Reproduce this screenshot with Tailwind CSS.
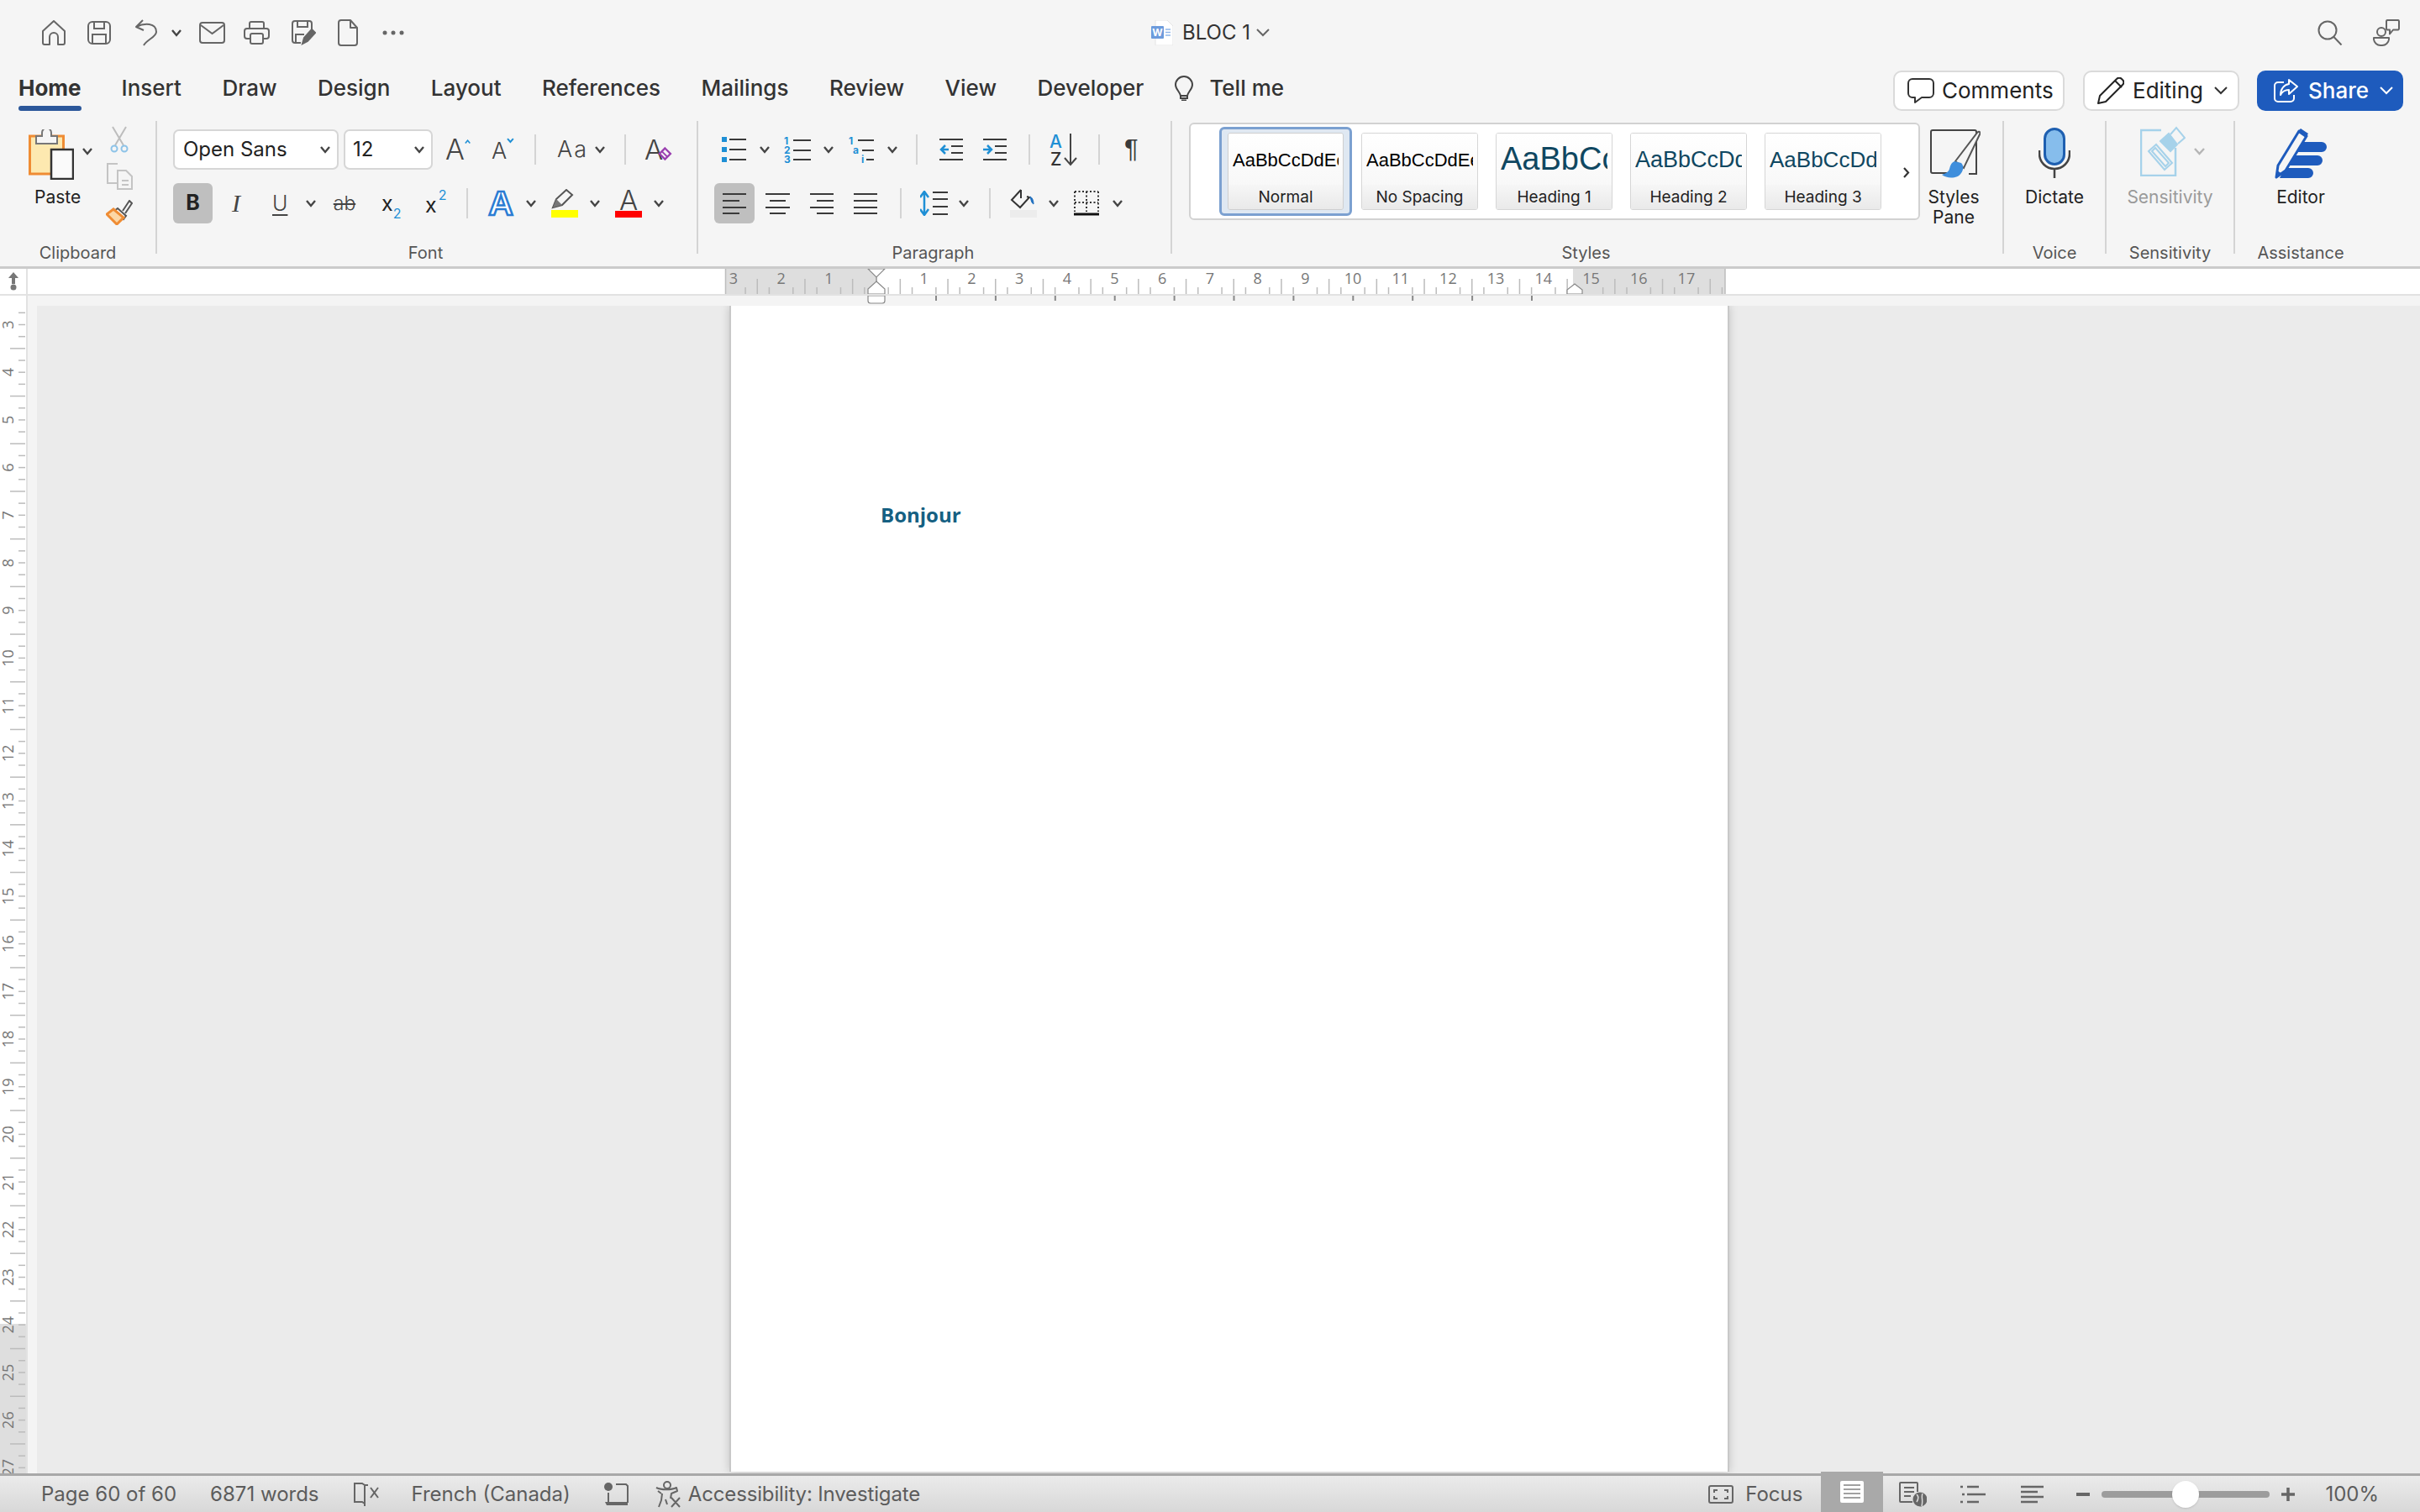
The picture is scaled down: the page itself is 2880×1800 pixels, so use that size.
<!DOCTYPE html>
<html lang="en">
<head>
    <meta charset="UTF-8">
    <script src="https://cdn.jsdelivr.net/npm/@tailwindcss/browser@4"></script>
    <title>BLOC 1</title>
</head>
<body class="bg-[#f5f5f5] font-[family-name:Inter,sans-serif] text-[#333] overflow-hidden">
<div class="w-[2880px] h-[1800px] flex flex-col">

    <!-- title bar -->
    <div class="h-[76px] pt-[2px] flex items-center relative shrink-0">
        <svg class="w-[30px] h-[30px] ml-[49px]" viewBox="0 0 30 30" fill="none" stroke="#666" stroke-width="2" stroke-linejoin="round"><path d="M2 13 15 1l13 12v14a2 2 0 0 1-2 2h-6v-9a5 5 0 0 0-10 0v9H4a2 2 0 0 1-2-2Z"/></svg>
        <svg class="w-[28px] h-[28px] ml-[25px]" viewBox="0 0 28 28" fill="none" stroke="#666" stroke-width="2"><rect x="1" y="1" width="26" height="26" rx="5"/><path d="M8 1v8h12V1M6 27V16h16v11"/></svg>
        <svg class="w-[28px] h-[32px] ml-[28px]" viewBox="0 0 28 32" fill="none" stroke="#666" stroke-width="2" stroke-linejoin="round"><path d="M10 1 2 9l9 4M2 9c10-5 24-5 24 6 0 6-11 9-15 16"/></svg>
        <svg class="w-[12px] h-[9px] ml-[16px]" viewBox="0 0 12 9" fill="none" stroke="#444" stroke-width="2.400"><path d="m1 1 5 6 5-6"/></svg>
        <svg class="w-[31px] h-[26px] ml-[21px]" viewBox="0 0 31 26" fill="none" stroke="#666" stroke-width="2"><rect x="1" y="1" width="29" height="24" rx="3"/><path d="m2 4 13.500 10L29 4"/></svg>
        <svg class="w-[31px] h-[28px] ml-[22px]" viewBox="0 0 31 28" fill="none" stroke="#666" stroke-width="2"><path d="M7 9V3a2 2 0 0 1 2-2h13a2 2 0 0 1 2 2v6M7 21H4a3 3 0 0 1-3-3v-6a3 3 0 0 1 3-3h23a3 3 0 0 1 3 3v6a3 3 0 0 1-3 3h-3"/><rect x="8" y="15" width="15" height="12" rx="2"/></svg>
        <svg class="w-[30px] h-[30px] ml-[25px]" viewBox="0 0 30 30" fill="none" stroke="#666" stroke-width="2"><path d="M12 27H5a3 3 0 0 1-3-3V4a3 3 0 0 1 3-3h17a3 3 0 0 1 3 3v7M8 1v7h12V1M6 26v-9h10"/><path d="m14 28 2-7 9-10 4 4-9 10Z" fill="#666" stroke="#666"/></svg>
        <svg class="w-[24px] h-[32px] ml-[26px]" viewBox="0 0 24 32" fill="none" stroke="#666" stroke-width="2" stroke-linejoin="round"><path d="M4 1h11l8 9v18a3 3 0 0 1-3 3H4a3 3 0 0 1-3-3V4a3 3 0 0 1 3-3ZM15 1v9h8"/></svg>
        <svg class="w-[26px] h-[6px] ml-[29px]" viewBox="0 0 26 6" fill="#666"><circle cx="3" cy="3" r="2.500"/><circle cx="13" cy="3" r="2.500"/><circle cx="23" cy="3" r="2.500"/></svg>

        <div class="flex items-center ml-[889px]">
            <svg class="w-[26px] h-[30px]" viewBox="0 0 26 30"><path d="M5 0h14l7 7v23H5Z" fill="#fff" stroke="#e4e4e4"/><rect x="0" y="7" width="15" height="15" rx="1" fill="#6c9bdc"/><text x="7.500" y="19" font-size="12" font-family="Inter" font-weight="700" text-anchor="middle" fill="#fff">W</text><path d="M17 11h6M17 14.500h6M17 18h6" stroke="#8fb6ea" stroke-width="1.500"/></svg>
            <span class="ml-[11px] text-[24px] leading-[30px] text-[#333]">BLOC 1</span>
            <svg class="w-[16px] h-[10px] ml-[7px]" viewBox="0 0 16 10" fill="none" stroke="#666" stroke-width="2"><path d="m1 1 7 7 7-7"/></svg>
        </div>

        <svg class="w-[30px] h-[30px] ml-auto" viewBox="0 0 30 30" fill="none" stroke="#666" stroke-width="2"><circle cx="12" cy="12" r="10.500"/><path d="m19.500 20 9 9.500"/></svg>
        <svg class="w-[32px] h-[32px] ml-[36px] mr-[24px]" viewBox="0 0 32 32" fill="none" stroke="#666" stroke-width="2" stroke-linejoin="round"><circle cx="10" cy="15" r="5"/><path d="M1 22h18v2a8 8 0 0 1-8 7H9a8 8 0 0 1-8-7Z"/><path d="M17 1h13a1.500 1.500 0 0 1 1 1.500V11a1.500 1.500 0 0 1-1 1.500h-6l-4 5v-5h-3a1.500 1.500 0 0 1-1-1.500V2.500A1.500 1.500 0 0 1 17 1Z" fill="#f5f5f5"/></svg>
    </div>

    <!-- tabs -->
    <div class="h-[68px] flex items-start shrink-0 text-[26px] leading-[28px] font-medium pl-[22px]">
        <div class="flex flex-col pt-[15px]">
            <span class="font-bold">Home</span>
            <div class="h-[6px] rounded-full bg-[#2b579a] mt-[7px]"></div>
        </div>
        <div class="flex gap-x-[48.500px] pt-[15px] ml-[48px]">
            <span>Insert</span><span>Draw</span><span>Design</span><span>Layout</span><span>References</span><span>Mailings</span><span>Review</span><span>View</span><span>Developer</span>
        </div>
        <div class="flex items-center pt-[14px] ml-[37px]">
            <svg class="w-[22px] h-[30px]" viewBox="0 0 22 30" fill="none" stroke="#444" stroke-width="2"><path d="M11 1a10 10 0 0 0-10 10c0 5 5 8 6 13h8c1-5 6-8 6-13A10 10 0 0 0 11 1Z"/><path d="M7 24h8v3H7ZM8 29.500h6"/></svg>
            <span class="ml-[19px]">Tell me</span>
        </div>
        <div class="flex items-start ml-auto mt-[8px] mr-[20px] font-normal text-[26px] text-[#222]">
            <div class="w-[204px] h-[48px] rounded-[10px] bg-white border-2 border-[#dadada] flex items-center pl-[15px]">
                <svg class="w-[32px] h-[30px]" viewBox="0 0 32 30" fill="none" stroke="#333" stroke-width="2" stroke-linejoin="round"><path d="M6 1h20a5 5 0 0 1 5 5v12a5 5 0 0 1-5 5H17l-8 6v-6H6a5 5 0 0 1-5-5V6a5 5 0 0 1 5-5Z"/></svg>
                <span class="ml-[9px]">Comments</span>
            </div>
            <div class="w-[186px] h-[48px] rounded-[10px] bg-white border-2 border-[#dadada] flex items-center pl-[15px] ml-[22px]">
                <svg class="w-[32px] h-[32px]" viewBox="0 0 32 32" fill="none" stroke="#222" stroke-width="2" stroke-linejoin="round"><path d="M1 31 3 22 23 2a4 4 0 0 1 6 0l1 1a4 4 0 0 1 0 6L10 29Z"/><path d="m21 4 8 8"/></svg>
                <span class="ml-[10px]">Editing</span>
                <svg class="w-[16px] h-[10px] ml-[13px]" viewBox="0 0 16 10" fill="none" stroke="#333" stroke-width="2"><path d="m1 1 7 7 7-7"/></svg>
            </div>
            <div class="w-[174px] h-[48px] rounded-[10px] bg-[#1e5bbd] flex items-center pl-[20px] ml-[21px] text-white font-medium">
                <svg class="w-[29px] h-[28px]" viewBox="0 0 29 28" fill="none" stroke="#fff" stroke-width="2" stroke-linejoin="round"><path d="M12 4H5a4 4 0 0 0-4 4v15a4 4 0 0 0 4 4h15a4 4 0 0 0 4-4v-4"/><path d="M18 1l10 8-10 9v-5c-5 0-8 2-10 6 0-7 4-12 10-13Z"/></svg>
                <span class="ml-[12px]">Share</span>
                <svg class="w-[16px] h-[10px] ml-[13px]" viewBox="0 0 16 10" fill="none" stroke="#fff" stroke-width="2"><path d="m1 1 7 7 7-7"/></svg>
            </div>
        </div>
    </div>

    <!-- ribbon -->
    <div class="h-[176px] flex items-start border-b-[3px] border-[#cbcbcb] shrink-0 text-[#222]">

        <!-- clipboard -->
        <div class="w-[185px] h-[173px] flex flex-col shrink-0">
            <div class="flex pt-[6px] h-[144px]">
                <div class="w-[64px] ml-[34px] flex flex-col items-start">
                    <svg class="w-[54px] h-[60px] mt-[4px]" viewBox="0 0 54 60"><rect x="1.500" y="8" width="40" height="45" fill="#fde9b0" stroke="#ef8c34" stroke-width="3"/><path d="M9 17V8h7V4a5 5 0 0 1 11 0v4h7v9Z" fill="#f5f5f5" stroke="#777" stroke-width="2"/><rect x="27" y="24" width="26" height="35" fill="#fafafa" stroke="#333" stroke-width="2.500"/></svg>
                    <span class="text-[21px] leading-[26px] mt-[8px] ml-[7px]">Paste</span>
                </div>
                <svg class="w-[12px] h-[9px] mt-[26px]" viewBox="0 0 12 9" fill="none" stroke="#444" stroke-width="2.400"><path d="m1 1 5 6 5-6"/></svg>
                <div class="flex flex-col ml-[16px] w-[32px]">
                    <svg class="w-[22px] h-[32px] ml-[5px]" viewBox="0 0 22 32" fill="none" stroke="#bdbdbd" stroke-width="2"><path d="M3 1 16 23M19 1 6 23"/><circle cx="5" cy="27" r="3.500" stroke="#8dc3e8"/><circle cx="17" cy="27" r="3.500" stroke="#8dc3e8"/></svg>
                    <svg class="w-[32px] h-[32px] mt-[12px]" viewBox="0 0 32 32" fill="none" stroke="#c4c4c4" stroke-width="2"><path d="M14 1H2v23h12"/><path d="M14 9h10l7 7v15H14Z" fill="#f5f5f5"/><path d="M19 21h8M19 26h8"/></svg>
                    <svg class="w-[32px] h-[30px] mt-[12px]" viewBox="0 0 32 30" fill="none"><path d="M20 13 28 1l3 3-8 12" stroke="#555" stroke-width="2"/><path d="m14 10 10 9-3 4-11-10Z" fill="#fff" stroke="#555" stroke-width="2"/><path d="M9 11 1 17l12 12 8-8Z" fill="#fcd7a6" stroke="#ef8c34" stroke-width="3"/></svg>
                </div>
            </div>
            <span class="text-[20px] leading-[24px] text-[#555] text-center mt-[1px]">Clipboard</span>
        </div>
        <div class="w-[2px] h-[158px] bg-[#d4d4d4] shrink-0"></div>

        <!-- font -->
        <div class="w-[642px] h-[173px] flex flex-col shrink-0">
            <div class="flex items-center h-[48px] mt-[10px]">
                <div class="w-[197px] h-[48px] ml-[19px] rounded-[7px] bg-white border-2 border-[#d6d6d6] flex items-center pl-[10px] text-[24px]">
                    <span>Open Sans</span>
                    <svg class="w-[12px] h-[9px] ml-auto mr-[8px]" viewBox="0 0 12 9" fill="none" stroke="#444" stroke-width="2.400"><path d="m1 1 5 6 5-6"/></svg>
                </div>
                <div class="w-[106px] h-[48px] ml-[6px] rounded-[7px] bg-white border-2 border-[#d6d6d6] flex items-center pl-[9px] text-[24px]">
                    <span>12</span>
                    <svg class="w-[12px] h-[9px] ml-auto mr-[8px]" viewBox="0 0 12 9" fill="none" stroke="#444" stroke-width="2.400"><path d="m1 1 5 6 5-6"/></svg>
                </div>
                <div class="w-[30px] ml-[15px] flex items-start">
                    <span class="text-[34px] leading-[36px] font-light text-[#444]">A</span>
                    <svg class="w-[9px] h-[7px] mt-[5px]" viewBox="0 0 9 7" fill="none" stroke="#1e8fd5" stroke-width="2"><path d="m1 6 3.500-4L8 6"/></svg>
                </div>
                <div class="w-[27px] ml-[25px] flex items-start pt-[4px]">
                    <span class="text-[27px] leading-[32px] font-light text-[#444]">A</span>
                    <svg class="w-[9px] h-[7px]" viewBox="0 0 9 7" fill="none" stroke="#1e8fd5" stroke-width="2"><path d="m1 1 3.500 4L8 1"/></svg>
                </div>
                <div class="w-[2px] h-[36px] ml-[24px] bg-[#d4d4d4]"></div>
                <span class="w-[34px] ml-[25px] text-[27px] leading-[32px] font-light tracking-[2px] text-[#444]">Aa</span>
                <svg class="w-[12px] h-[9px] ml-[11px]" viewBox="0 0 12 9" fill="none" stroke="#444" stroke-width="2.400"><path d="m1 1 5 6 5-6"/></svg>
                <div class="w-[2px] h-[36px] ml-[23px] bg-[#d4d4d4]"></div>
                <div class="w-[33px] ml-[22px] flex items-start">
                    <span class="text-[33px] leading-[36px] font-light text-[#444]">A</span>
                    <svg class="w-[18px] h-[18px] mt-[14px] ml-[-6px]" viewBox="0 0 18 18" fill="#f5f5f5" stroke="#9a3fb0" stroke-width="2.500"><path d="M9 2 16 9 9 16 2 9Z"/><path d="m5 6 7 7" stroke-width="2"/></svg>
                </div>
            </div>
            <div class="flex items-center h-[48px] mt-[16px]">
                <div class="w-[47px] h-[48px] ml-[19px] rounded-[6px] bg-[#bfbfbf] flex items-center justify-center text-[25px] font-bold">B</div>
                <span class="w-[12px] ml-[23px] text-[30px] leading-[32px] italic font-[family-name:'Liberation_Serif',serif] text-[#444]">I</span>
                <span class="w-[18px] ml-[36px] text-[25px] leading-[30px] font-light underline underline-offset-[4px] text-[#444]">U</span>
                <svg class="w-[12px] h-[9px] ml-[22px]" viewBox="0 0 12 9" fill="none" stroke="#444" stroke-width="2.400"><path d="m1 1 5 6 5-6"/></svg>
                <span class="w-[32px] ml-[18px] text-center text-[23px] leading-[30px] font-light line-through text-[#444]">ab</span>
                <div class="w-[24px] ml-[28px] flex items-end text-[25px] leading-[28px]">x<span class="text-[16px] leading-[16px] text-[#1e8fd5] mb-[-6px]">2</span></div>
                <div class="w-[30px] ml-[28px] flex items-start text-[25px] leading-[28px] pt-[4px]">x<span class="text-[16px] leading-[16px] text-[#1e8fd5] mt-[-6px] ml-[2px]">2</span></div>
                <div class="w-[2px] h-[36px] ml-[19px] bg-[#d4d4d4]"></div>
                <span class="w-[32px] ml-[23px] text-center text-[41px] leading-[44px] font-bold font-[family-name:'Liberation_Sans',sans-serif] text-white [-webkit-text-stroke:2.500px_#2b7cd3]">A</span>
                <svg class="w-[12px] h-[9px] ml-[14px]" viewBox="0 0 12 9" fill="none" stroke="#444" stroke-width="2.400"><path d="m1 1 5 6 5-6"/></svg>
                <svg class="w-[32px] h-[34px] ml-[18px]" viewBox="0 0 32 34"><rect y="25" width="32" height="9" fill="#ffff00"/><path d="m2 22 4-10L18 1l7 6-12 12Z" fill="#f5f5f5" stroke="#555" stroke-width="2"/><path d="m2 22 4-10 7 7Z" fill="#777"/></svg>
                <svg class="w-[12px] h-[9px] ml-[14px]" viewBox="0 0 12 9" fill="none" stroke="#444" stroke-width="2.400"><path d="m1 1 5 6 5-6"/></svg>
                <div class="w-[32px] ml-[18px] flex flex-col items-center">
                    <span class="text-[33px] leading-[26px] font-light text-[#444]">A</span>
                    <div class="w-[32px] h-[8px] bg-[#ff0000]"></div>
                </div>
                <svg class="w-[12px] h-[9px] ml-[14px]" viewBox="0 0 12 9" fill="none" stroke="#444" stroke-width="2.400"><path d="m1 1 5 6 5-6"/></svg>
            </div>
            <span class="text-[20px] leading-[24px] text-[#555] text-center mt-[23px] pr-[3px]">Font</span>
        </div>
        <div class="w-[2px] h-[158px] bg-[#d4d4d4] shrink-0"></div>

        <!-- paragraph -->
        <div class="w-[562px] h-[173px] flex flex-col shrink-0">
            <div class="flex items-center h-[48px] mt-[10px]">
                <svg class="w-[30px] h-[30px] ml-[27px]" viewBox="0 0 30 30"><path d="M1 0h6v6H1ZM1 12h6v6H1ZM1 24h6v6H1Z" fill="#1e8fd5"/><path d="M10 3h20M10 15h20M10 27h20" stroke="#3a3a3a" stroke-width="2"/></svg>
                <svg class="w-[12px] h-[9px] ml-[16px]" viewBox="0 0 12 9" fill="none" stroke="#444" stroke-width="2.400"><path d="m1 1 5 6 5-6"/></svg>
                <svg class="w-[32px] h-[32px] ml-[17px]" viewBox="0 0 32 32" font-family="Inter" font-size="12" font-weight="700" fill="#1e8fd5"><text x="0" y="10">1</text><text x="0" y="21">2</text><text x="0" y="32">3</text><path d="M11 5h21M11 17h21M11 28h21" stroke="#3a3a3a" stroke-width="2"/></svg>
                <svg class="w-[12px] h-[9px] ml-[15px]" viewBox="0 0 12 9" fill="none" stroke="#444" stroke-width="2.400"><path d="m1 1 5 6 5-6"/></svg>
                <svg class="w-[30px] h-[32px] ml-[18px]" viewBox="0 0 30 32" font-family="Inter" font-size="12" font-weight="700" fill="#1e8fd5"><text x="0" y="10">1</text><text x="5" y="21">a</text><text x="15" y="32">i</text><path d="M11 5h19M16 17h14M21 28h9" stroke="#3a3a3a" stroke-width="2"/></svg>
                <svg class="w-[12px] h-[9px] ml-[16px]" viewBox="0 0 12 9" fill="none" stroke="#444" stroke-width="2.400"><path d="m1 1 5 6 5-6"/></svg>
                <div class="w-[2px] h-[36px] ml-[22px] bg-[#d4d4d4]"></div>
                <svg class="w-[28px] h-[32px] ml-[26px]" viewBox="0 0 28 32"><path d="M0 4h28M14 12h14M14 20h14M0 28h28" stroke="#3a3a3a" stroke-width="2"/><path d="M11 16H2m5-5-5 5 5 5" fill="none" stroke="#1e8fd5" stroke-width="2.500"/></svg>
                <svg class="w-[28px] h-[32px] ml-[24px]" viewBox="0 0 28 32"><path d="M0 4h28M14 12h14M14 20h14M0 28h28" stroke="#3a3a3a" stroke-width="2"/><path d="M0 16h9M5 11l5 5-5 5" fill="none" stroke="#1e8fd5" stroke-width="2.500"/></svg>
                <div class="w-[2px] h-[36px] ml-[26px] bg-[#d4d4d4]"></div>
                <svg class="w-[33px] h-[40px] ml-[23px]" viewBox="0 0 33 40" font-family="Inter" font-size="21" font-weight="500"><text x="0" y="18" fill="#1e8fd5">A</text><text x="1" y="39" fill="#333">Z</text><path d="M25 1v36M18 30l7 8 7-8" fill="none" stroke="#444" stroke-width="2"/></svg>
                <div class="w-[2px] h-[36px] ml-[25px] bg-[#d4d4d4]"></div>
                <span class="w-[20px] ml-[29px] text-[31px] leading-[36px] text-[#3a3a3a] font-[family-name:'Liberation_Sans',sans-serif]">¶</span>
            </div>
            <div class="flex items-center h-[48px] mt-[16px]">
                <div class="w-[48px] h-[48px] ml-[19px] rounded-[6px] bg-[#bfbfbf] flex items-center justify-center">
                    <svg class="w-[28px] h-[26px]" viewBox="0 0 28 26"><path d="M0 2h28M0 10h20M0 18h28M0 25h20" stroke="#3a3a3a" stroke-width="2"/></svg>
                </div>
                <svg class="w-[29px] h-[26px] ml-[13px]" viewBox="0 0 29 26"><path d="M0 2h29M5 10h19M0 18h29M5 25h19" stroke="#3a3a3a" stroke-width="2"/></svg>
                <svg class="w-[28px] h-[26px] ml-[24px]" viewBox="0 0 28 26"><path d="M0 2h28M8 10h20M0 18h28M8 25h20" stroke="#3a3a3a" stroke-width="2"/></svg>
                <svg class="w-[28px] h-[26px] ml-[24px]" viewBox="0 0 28 26"><path d="M0 2h28M0 10h28M0 18h28M0 25h28" stroke="#3a3a3a" stroke-width="2"/></svg>
                <div class="w-[2px] h-[36px] ml-[27px] bg-[#d4d4d4]"></div>
                <svg class="w-[33px] h-[30px] ml-[22px]" viewBox="0 0 33 30"><path d="M15 2h18M15 10h18M15 19h18M15 28h18" stroke="#3a3a3a" stroke-width="2"/><path d="M5 2v26M0 8l5-7 5 7M0 22l5 7 5-7" fill="none" stroke="#1e8fd5" stroke-width="2.500"/></svg>
                <svg class="w-[12px] h-[9px] ml-[13px]" viewBox="0 0 12 9" fill="none" stroke="#444" stroke-width="2.400"><path d="m1 1 5 6 5-6"/></svg>
                <div class="w-[2px] h-[36px] ml-[24px] bg-[#d4d4d4]"></div>
                <svg class="w-[32px] h-[34px] ml-[23px]" viewBox="0 0 32 34"><rect y="25" width="32" height="9" fill="#ececec"/><path d="M13 1 2 13l10 9 11-12-3-1" fill="#f5f5f5" stroke="#333" stroke-width="2"/><path d="M13 1v10" stroke="#333" stroke-width="2"/><path d="M24 9c2 1 4 4 4 9-2-1-3-4-4-9Z" fill="#1e6fc0" stroke="#1e6fc0"/></svg>
                <svg class="w-[12px] h-[9px] ml-[14px]" viewBox="0 0 12 9" fill="none" stroke="#444" stroke-width="2.400"><path d="m1 1 5 6 5-6"/></svg>
                <svg class="w-[30px] h-[30px] ml-[18px]" viewBox="0 0 30 30" fill="none"><path d="M1 1v24M29 1v24M1 1h28M1 14h28M15 1v24" stroke="#333" stroke-width="2" stroke-dasharray="2 2.500"/><path d="M0 28h30" stroke="#111" stroke-width="3"/></svg>
                <svg class="w-[12px] h-[9px] ml-[16px]" viewBox="0 0 12 9" fill="none" stroke="#444" stroke-width="2.400"><path d="m1 1 5 6 5-6"/></svg>
            </div>
            <span class="text-[20px] leading-[24px] text-[#555] text-center mt-[23px] pr-[3px]">Paragraph</span>
        </div>
        <div class="w-[2px] h-[158px] bg-[#d4d4d4] shrink-0"></div>

        <!-- styles -->
        <div class="w-[988px] h-[173px] flex flex-col shrink-0">
            <div class="flex items-start h-[144px]">
                <div class="w-[870px] h-[116px] ml-[20px] mt-[2px] bg-white border-2 border-[#d2d2d2] rounded-[6px] flex items-start pl-[34px] pt-[3px] shrink-0">
                    <div class="w-[158px] h-[106px] rounded-[6px] border-[3px] border-[#7ba0d0] bg-[#dfe8f2] pl-[7px] pt-[4px] shrink-0">
                        <div class="w-[138px] h-[92px] rounded-[3px] border border-[#cfcfcf] flex flex-col overflow-hidden">
                            <div class="h-[61px] bg-linear-to-b from-white to-[#f8f8f8] px-[5px]"><div class="overflow-hidden whitespace-nowrap leading-[63px] text-[22px] text-black font-[family-name:'Liberation_Sans',sans-serif]">AaBbCcDdEe</div></div>
                            <div class="flex-1 bg-linear-to-b from-[#f6f6f6] to-[#e9e9e9] text-center text-[19px] leading-[30px] text-[#222]">Normal</div>
                        </div>
                    </div>
                    <div class="w-[139px] h-[92px] ml-[11px] mt-[7px] rounded-[3px] border border-[#d6d6d6] flex flex-col overflow-hidden shrink-0">
                        <div class="h-[61px] bg-linear-to-b from-white to-[#f8f8f8] px-[5px]"><div class="overflow-hidden whitespace-nowrap leading-[63px] text-[22px] text-black font-[family-name:'Liberation_Sans',sans-serif]">AaBbCcDdEe</div></div>
                        <div class="flex-1 bg-linear-to-b from-[#f6f6f6] to-[#e9e9e9] text-center text-[19px] leading-[30px] text-[#222]">No Spacing</div>
                    </div>
                    <div class="w-[139px] h-[92px] ml-[21px] mt-[7px] rounded-[3px] border border-[#d6d6d6] flex flex-col overflow-hidden shrink-0">
                        <div class="h-[61px] bg-linear-to-b from-white to-[#f8f8f8] px-[5px]"><div class="overflow-hidden whitespace-nowrap leading-[61px] text-[38px] text-[#0f4761] font-[family-name:'Liberation_Sans',sans-serif]">AaBbCcDd</div></div>
                        <div class="flex-1 bg-linear-to-b from-[#f6f6f6] to-[#e9e9e9] text-center text-[19px] leading-[30px] text-[#222]">Heading 1</div>
                    </div>
                    <div class="w-[139px] h-[92px] ml-[21px] mt-[7px] rounded-[3px] border border-[#d6d6d6] flex flex-col overflow-hidden shrink-0">
                        <div class="h-[61px] bg-linear-to-b from-white to-[#f8f8f8] px-[5px]"><div class="overflow-hidden whitespace-nowrap leading-[62px] text-[27px] text-[#0f4761] font-[family-name:'Liberation_Sans',sans-serif]">AaBbCcDdEe</div></div>
                        <div class="flex-1 bg-linear-to-b from-[#f6f6f6] to-[#e9e9e9] text-center text-[19px] leading-[30px] text-[#222]">Heading 2</div>
                    </div>
                    <div class="w-[139px] h-[92px] ml-[21px] mt-[7px] rounded-[3px] border border-[#d6d6d6] flex flex-col overflow-hidden shrink-0">
                        <div class="h-[61px] bg-linear-to-b from-white to-[#f8f8f8] px-[5px]"><div class="overflow-hidden whitespace-nowrap leading-[62px] text-[26px] text-[#0f4761] font-[family-name:'Liberation_Sans',sans-serif]">AaBbCcDdEe</div></div>
                        <div class="flex-1 bg-linear-to-b from-[#f6f6f6] to-[#e9e9e9] text-center text-[19px] leading-[30px] text-[#222]">Heading 3</div>
                    </div>
                    <svg class="w-[8px] h-[13px] ml-[26px] self-center" viewBox="0 0 8 13" fill="none" stroke="#333" stroke-width="2.200"><path d="m1 1 5 5.500L1 12"/></svg>
                </div>
                <div class="w-[70px] ml-[5px] mt-[10px] flex flex-col items-center shrink-0 text-[21px] leading-[24px]">
                    <svg class="w-[60px] h-[60px] ml-[4px]" viewBox="0 0 60 60" fill="none"><path d="M22 52H3a2 2 0 0 1-2-2V3a2 2 0 0 1 2-2h50a2 2 0 0 1 2 2v50h-9" stroke="#444" stroke-width="2"/><path d="M30 38 56 4c3-3 4 0 3 2L40 46Z" fill="#f5f5f5" stroke="#555" stroke-width="2"/><path d="M29 38c-3 1-5 4-6 9-1 4-6 6-9 7 6 5 19 5 23-2 3-4 3-9 0-12Z" fill="#3f8edc"/></svg>
                    <span class="mt-[9px]">Styles</span>
                    <span>Pane</span>
                </div>
            </div>
            <span class="text-[20px] leading-[24px] text-[#555] text-center mt-[1px] pr-[3px]">Styles</span>
        </div>
        <div class="w-[2px] h-[158px] bg-[#d4d4d4] shrink-0"></div>

        <!-- voice -->
        <div class="w-[120px] h-[173px] flex flex-col items-center shrink-0">
            <div class="h-[144px] flex flex-col items-center pt-[8px] text-[21px] leading-[24px]">
                <svg class="w-[38px] h-[60px]" viewBox="0 0 38 60" fill="none"><rect x="7.500" y="1.500" width="23" height="42" rx="11.500" fill="#86bdec" stroke="#1e5fb0" stroke-width="3"/><path d="M1 27v4c0 10 8 18 18 18s18-8 18-18v-4M19 49v11" stroke="#444" stroke-width="2.500"/></svg>
                <span class="mt-[11px]">Dictate</span>
            </div>
            <span class="text-[20px] leading-[24px] text-[#555] mt-[1px]">Voice</span>
        </div>
        <div class="w-[2px] h-[158px] bg-[#d4d4d4] shrink-0"></div>

        <!-- sensitivity -->
        <div class="w-[151px] h-[173px] flex flex-col items-center shrink-0">
            <div class="h-[144px] flex flex-col items-center pt-[6px] text-[21px] leading-[24px]">
                <div class="flex items-center ml-[6px]">
                    <svg class="w-[54px] h-[60px]" viewBox="0 0 54 60" fill="none" stroke="#a6d2ea" stroke-width="2"><path d="M25 5H1v54h41V26" stroke-width="2.500"/><path d="m10 30 9-8 19 22-9 8Z"/><path d="m14 30 4-4 16 18-4 4Z"/><path d="m24 18 10-9 10 13-8 8Z" fill="#a6d2ea"/><path d="m36 10 7-8 10 12-8 7"/></svg>
                    <svg class="w-[13px] h-[9px] ml-[10px]" viewBox="0 0 13 9" fill="none" stroke="#b5b5b5" stroke-width="2.400"><path d="m1 1 5.500 6L12 1"/></svg>
                </div>
                <span class="mt-[13px] text-[#9a9a9a]">Sensitivity</span>
            </div>
            <span class="text-[20px] leading-[24px] text-[#555] mt-[1px]">Sensitivity</span>
        </div>
        <div class="w-[2px] h-[158px] bg-[#d4d4d4] shrink-0"></div>

        <!-- assistance -->
        <div class="w-[156px] h-[173px] flex flex-col items-center shrink-0">
            <div class="h-[144px] flex flex-col items-center pt-[8px] text-[21px] leading-[24px]">
                <svg class="w-[62px] h-[61px]" viewBox="0 0 62 61"><path d="M30 17h26a6 6 0 0 1 0 12H24ZM21 33h30a5.500 5.500 0 0 1 0 12H14ZM12 48h28a5.500 5.500 0 0 1 0 12H6Z" fill="#1e5bbd"/><path d="m2 59 2-14L29 4l9 6L13 51Z" fill="#f5f5f5" stroke="#1e5bbd" stroke-width="3" stroke-linejoin="round"/><path d="M27 5l4-4 9 6-3 5ZM2 59l1-8 6 4Z" fill="#1e5bbd"/></svg>
                <span class="mt-[10px]">Editor</span>
            </div>
            <span class="text-[20px] leading-[24px] text-[#555] mt-[1px]">Assistance</span>
        </div>
    </div>

    <!-- horizontal ruler -->
    <div class="h-[32px] flex bg-white border-b-2 border-[#e2e2e2] shrink-0">
        <div class="w-[33px] border-r-2 border-[#e2e2e2] flex items-start justify-center pt-[4px] shrink-0">
            <svg class="w-[12px] h-[22px]" viewBox="0 0 12 22" fill="#777"><path d="M6 0 12 7H8v7H4V7H0Z"/><circle cx="6" cy="18" r="3.500"/></svg>
        </div>
        <svg id="hruler" class="w-[2847px] h-[30px] shrink-0" viewBox="33 0 2847 30"></svg>
    </div>

    <div class="flex-1 flex min-h-0">
        <!-- vertical ruler -->
        <div class="w-[33px] border-r-2 border-[#e2e2e2] bg-white overflow-hidden shrink-0">
            <svg id="vruler" class="w-[31px] h-[1402px] block" viewBox="0 352 31 1402"></svg>
        </div>
        <div class="flex-1 flex flex-col bg-[#f4f4f4] relative min-w-0">
            <!-- default tab stops under the ruler -->
            <svg id="tabs" class="h-[12px] w-[2847px] block shrink-0" viewBox="33 0 2847 12"></svg>
            <div class="flex-1 ml-[11px] bg-[#ebebeb] pl-[824px] overflow-hidden">
                <div class="w-[1190px] h-[1388px] bg-white border-x-2 border-[#c8c8c8] shadow-[0_0_10px_rgba(0,0,0,0.18)] pl-[178px] pt-[233px]">
                    <p class="text-[24px] leading-[32px] font-bold text-[#156082] font-[family-name:'Open_Sans',sans-serif]">Bonjour</p>
                </div>
            </div>
        </div>
    </div>

    <!-- status bar -->
    <div class="h-[46px] flex items-center border-t-[3px] border-[#a8a8a8] bg-linear-to-b from-[#ebebeb] to-[#d8d8d8] text-[24px] text-[#5c5c5c] shrink-0 relative">
        <span class="ml-[49px]">Page 60 of 60</span>
        <span class="ml-[40px]">6871 words</span>
        <svg class="w-[30px] h-[28px] ml-[41px]" viewBox="0 0 30 28" fill="none" stroke="#666" stroke-width="2"><path d="M1 1h9l3 2v22l-3-2H1ZM13 3h4M13 25v3"/><path d="m20 6 9 12M29 6l-9 12"/></svg>
        <span class="ml-[39px]">French (Canada)</span>
        <svg class="w-[30px] h-[30px] ml-[40px]" viewBox="0 0 30 30" fill="none"><circle cx="5" cy="6" r="5" fill="#666"/><path d="M5 13v11M14 3h12l2 2v20" stroke="#666" stroke-width="2"/><path d="M1 24h27v4H3Z" fill="#666"/></svg>
        <svg class="w-[30px] h-[32px] ml-[31px]" viewBox="0 0 30 32" fill="none" stroke="#666" stroke-width="2" stroke-linejoin="round"><circle cx="14" cy="5" r="4"/><path d="M1 8c6 3 18 3 24 0l1 4-7 3-1 6M7 15l-4-3M8 15l-1 8-3 8M12 22l2 6M19 20l10 11M29 20 19 31"/></svg>
        <span class="ml-[9px] tracking-[-0.15px]">Accessibility: Investigate</span>

        <svg class="w-[30px] h-[22px] ml-auto" viewBox="0 0 30 22" fill="none" stroke="#666" stroke-width="2"><rect x="1" y="1" width="28" height="20" rx="2"/><path d="M7 9V6h4M19 6h4v3M7 13v3h4M19 16h4v-3"/></svg>
        <span class="ml-[14px]">Focus</span>
        <div class="w-[74px] h-[48px] ml-[22px] mt-[-5px] bg-[#a9a9a9] flex items-center justify-center">
            <svg class="w-[28px] h-[26px]" viewBox="0 0 28 26"><rect width="28" height="26" rx="2" fill="#fff"/><path d="M4 5h20M4 10h20M4 15h20M4 20h20" stroke="#a0a0a0" stroke-width="2"/></svg>
        </div>
        <svg class="w-[33px] h-[30px] ml-[19px]" viewBox="0 0 33 30" fill="none"><path d="M16 24H2a1 1 0 0 1-1-1V2a1 1 0 0 1 1-1h19a1 1 0 0 1 1 1v10M6 7h12M6 12h12M6 17h8" stroke="#666" stroke-width="2"/><circle cx="25" cy="21" r="8.500" fill="#666"/><path d="M21 15c3 3 2 6 0 9M28 14c-2 4 1 8-1 15" stroke="#ddd" stroke-width="1.500"/></svg>
        <svg class="w-[30px] h-[22px] ml-[40px]" viewBox="0 0 30 22"><path d="M0 2h3M8 2h14M8 11h22M8 20h14M2 11h3M0 20h3" stroke="#666" stroke-width="2.500"/></svg>
        <svg class="w-[27px] h-[22px] ml-[42px]" viewBox="0 0 27 22"><path d="M0 2h27M0 8h20M0 14h27M0 20h20" stroke="#666" stroke-width="2.500"/></svg>
        <div class="w-[16px] h-[4px] ml-[39px] bg-[#666]"></div>
        <div class="w-[200px] h-[8px] ml-[14px] rounded-full bg-[#9c9c9c] flex items-center">
            <div class="w-[32px] h-[32px] ml-[84px] rounded-full bg-white shadow-sm shrink-0"></div>
        </div>
        <svg class="w-[16px] h-[16px] ml-[14px]" viewBox="0 0 16 16"><path d="M0 8h16M8 0v16" stroke="#666" stroke-width="3.500"/></svg>
        <span class="ml-[36px] mr-[49px]">100%</span>
    </div>
</div>

<script>
    // ruler marks: 1 cm = 56.7px, a tick every quarter
    const cm = 56.7;
    const zero = 1043;

    let h = `<rect x="863" y="0" width="180" height="30" fill="#dedede"/><rect x="1872" y="0" width="181" height="30" fill="#dedede"/><path d="M863.500 0v30M2053 0v30" stroke="#bdbdbd" stroke-width="1.500"/>`;
    for (let k = -12; k <= 71; k++) {
        let x = zero + k * cm / 4;
        if (k === 0) continue;
        if (k % 4 === 0) {
            h += `<text x="${x}" y="18" font-family="Open Sans" font-size="18" fill="#777" text-anchor="middle">${Math.abs(k / 4)}</text>`;
        } else {
            let top = Math.abs(k % 4) === 2 ? 12 : 22;
            h += `<path d="M${x} ${top}V30" stroke="#bcbcbc" stroke-width="1.500"/>`;
        }
    }
    h += `<path d="M1033 0h20l-10 10Z" fill="#fff" stroke="#888" stroke-width="1.200"/><path d="M1043 10v6" stroke="#aaa" stroke-width="2"/><path d="M1043 15l10 9v6h-20v-6Z" fill="#fff" stroke="#888" stroke-width="1.200"/>`;
    h += `<path d="M1874 18l9 7v5h-18v-5Z" fill="#fff" stroke="#888" stroke-width="1.200"/>`;
    document.getElementById('hruler').innerHTML = h;

    let v = `<rect x="0" y="1576" width="31" height="178" fill="#dedede"/>`;
    for (let j = -1; j <= 100; j++) {
        let y = 386.5 + j * cm / 4;
        if (j % 4 === 0) {
            v += `<text x="10" y="${y}" transform="rotate(-90 10 ${y})" dy="6" font-family="Open Sans" font-size="18" fill="#777" text-anchor="middle">${3 + j / 4}</text>`;
        }
        let left = Math.abs(j % 4) === 2 ? 12 : 22;
        if (j % 4 !== 0) v += `<path d="M${left} ${y}H30" stroke="#bcbcbc" stroke-width="1.500"/>`;
        else v += `<path d="M22 ${y}H30" stroke="#bcbcbc" stroke-width="1.500"/>`;
    }
    document.getElementById('vruler').innerHTML = v;

    let t = `<path d="M1033 0h20v6a3 3 0 0 1-3 3h-14a3 3 0 0 1-3-3Z" fill="#fff" stroke="#888" stroke-width="1.200"/>`;
    for (let x = 1114; x < 1872; x += 70.9) {
        t += `<path d="M${x} 0v6" stroke="#888" stroke-width="2"/>`;
    }
    document.getElementById('tabs').innerHTML = t;
</script>
</body>
</html>
